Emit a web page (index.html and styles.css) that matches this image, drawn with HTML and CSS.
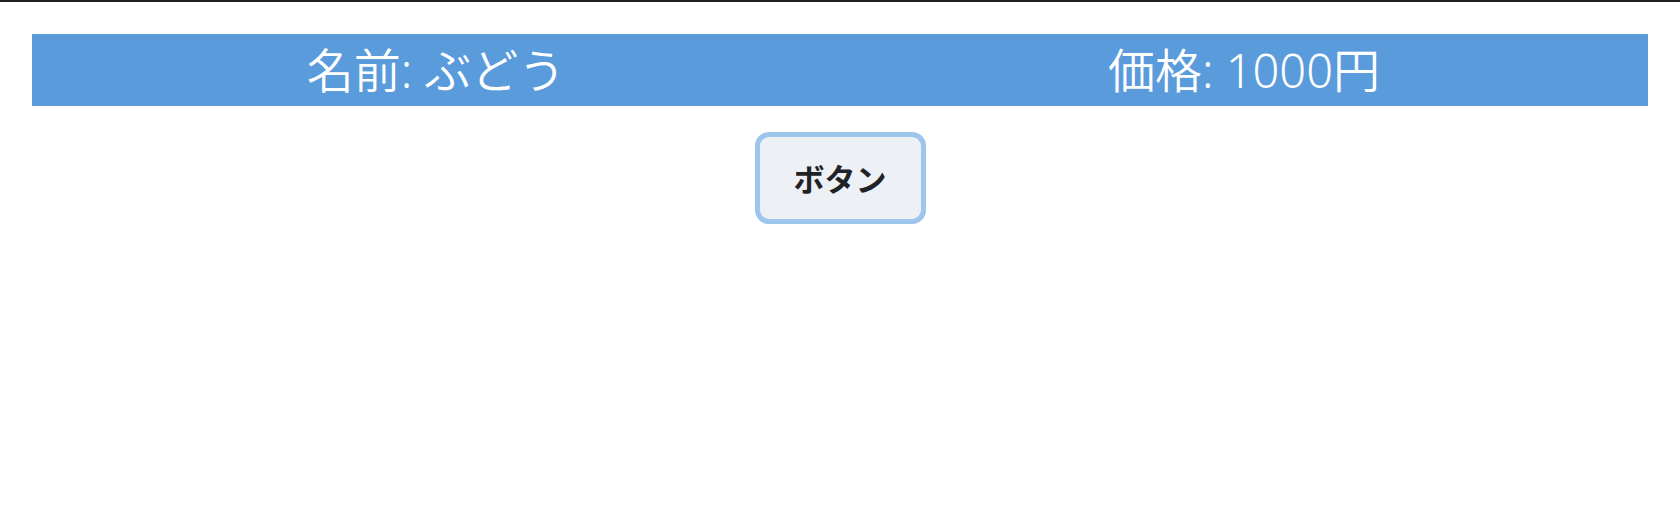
FILE: index.html
```html
<!DOCTYPE html>
<html lang="ja">

<head>
    <meta charset="UTF-8">
    <meta name="viewport" content="width=device-width, initial-scale=1.0">
    <title>商品</title>
    <link rel="stylesheet" href="styles.css">
</head>

<body>
    <div class="page">
        <div class="item-bar">
            <div class="item-cell">名前: ぶどう</div>
            <div class="item-cell">価格: 1000円</div>
        </div>
        <div class="actions">
            <button class="action-button">ボタン</button>
        </div>
    </div>
</body>

</html>
```

FILE: styles.css
```css
body {
    margin: 0;
    padding: 0;
    border-top: 2px solid #222222;
    background-color: #fff;
    font-family: 'Noto Sans', 'Noto Sans CJK JP', sans-serif;
}

.page {
    padding: 32px;
}

.item-bar {
    display: flex;
    height: 72px;
    background-color: #5a9bdc;
    color: #fff;
}

.item-cell {
    flex: 1;
    display: flex;
    justify-content: center;
    align-items: center;
    font-size: 47px;
    font-weight: 350;
    padding-bottom: 6px;
}

.actions {
    display: flex;
    justify-content: center;
    margin-top: 26px;
}

.action-button {
    padding: 20px 34px;
    border: 5px solid #9ec5eb;
    border-radius: 14px;
    background-color: #edf0f5;
    color: #1f2328;
    font-family: 'Noto Sans CJK JP', sans-serif;
    font-size: 31px;
    font-weight: bold;
    line-height: 42px;
    cursor: pointer;
}
```
